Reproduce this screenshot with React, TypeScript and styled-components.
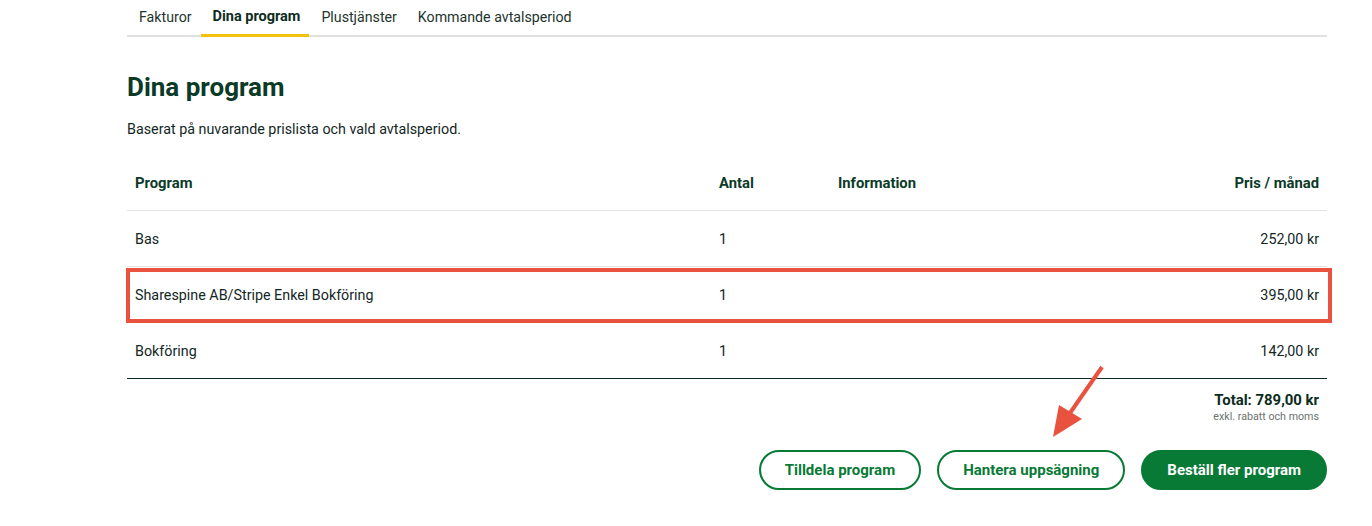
import React from "react";
import styled, { createGlobalStyle } from "styled-components";

const Global = createGlobalStyle`
  html, body { margin: 0; padding: 0; background: #fff; }
  body {
    font-family: Roboto, "Noto Sans", "Liberation Sans", sans-serif;
    color: #13271f;
    -webkit-font-smoothing: antialiased;
  }
`;

const Page = styled.div`
  position: relative;
  width: 1200px;
  padding-left: 127px;
  min-height: 526px;
`;

const TabBar = styled.nav`
  display: flex;
  height: 35px;
  border-bottom: 2px solid #dfe2e1;
`;

const Tab = styled.div<{ $active?: boolean }>`
  display: flex;
  align-items: center;
  padding: 0 9px 1px 12px;
  font-size: ${(p) => (p.$active ? "14.5px" : "14.2px")};
  font-weight: ${(p) => (p.$active ? 700 : 400)};
  color: ${(p) => (p.$active ? "#0d2c20" : "#22342c")};
  border-bottom: 3px solid ${(p) => (p.$active ? "#f4c20d" : "transparent")};
  margin-bottom: -2px;
`;

const Title = styled.h1`
  margin: 34px 0 0;
  font-size: 26px;
  line-height: 32px;
  font-weight: 700;
  color: #0b3a27;
`;

const Lead = styled.p`
  margin: 17px 0 0;
  font-size: 14.3px;
  line-height: 18px;
  color: #13271f;
`;

const Table = styled.div`
  margin-top: 17px;
`;

const Row = styled.div<{ $head?: boolean; $last?: boolean }>`
  display: grid;
  grid-template-columns: 584px 119px 1fr 200px;
  height: 55px;
  align-items: center;
  border-bottom: 1px solid ${(p) => (p.$last ? "#0d2c20" : "#e2e4e3")};
  font-size: ${(p) => (p.$head ? "14.8px" : "14.3px")};
  font-weight: ${(p) => (p.$head ? 700 : 400)};
  color: ${(p) => (p.$head ? "#0b3a27" : "#13271f")};
`;

const Cell = styled.div<{ $right?: boolean }>`
  padding: 0 8px;
  text-align: ${(p) => (p.$right ? "right" : "left")};
`;

const Totals = styled.div`
  display: flex;
  flex-direction: column;
  align-items: flex-end;
  padding: 13px 8px 0 0;
`;

const TotalLine = styled.div`
  font-size: 14.9px;
  font-weight: 700;
  line-height: 16px;
  color: #0d2c20;
`;

const TotalNote = styled.div`
  margin-top: 3px;
  font-size: 10.7px;
  line-height: 12px;
  color: #6b7370;
`;

const Actions = styled.div`
  display: flex;
  justify-content: flex-end;
  gap: 16px;
  margin-top: 27px;
`;

const Button = styled.button<{ $primary?: boolean }>`
  height: 40px;
  box-sizing: border-box;
  padding: 0 24px;
  border-radius: 20px;
  border: 2px solid #087a36;
  background: ${(p) => (p.$primary ? "#087a36" : "#fff")};
  color: ${(p) => (p.$primary ? "#fff" : "#087a36")};
  font-family: inherit;
  font-size: 15px;
  font-weight: 700;
  cursor: pointer;
`;

const Highlight = styled.div`
  position: absolute;
  left: 126px;
  top: 268px;
  width: 1206px;
  height: 55px;
  box-sizing: border-box;
  border: 4px solid #e8523f;
  pointer-events: none;
`;

const Arrow = styled.svg`
  position: absolute;
  left: 1040px;
  top: 355px;
  pointer-events: none;
`;

const rows = [
  { name: "Bas", qty: "1", price: "252,00 kr" },
  { name: "Sharespine AB/Stripe Enkel Bokföring", qty: "1", price: "395,00 kr" },
  { name: "Bokföring", qty: "1", price: "142,00 kr" },
];

export default function App() {
  return (
    <Page>
      <Global />
      <TabBar>
        <Tab>Fakturor</Tab>
        <Tab $active>Dina program</Tab>
        <Tab>Plustjänster</Tab>
        <Tab>Kommande avtalsperiod</Tab>
      </TabBar>
      <Title>Dina program</Title>
      <Lead>Baserat på nuvarande prislista och vald avtalsperiod.</Lead>
      <Table>
        <Row $head>
          <Cell>Program</Cell>
          <Cell>Antal</Cell>
          <Cell>Information</Cell>
          <Cell $right>Pris / månad</Cell>
        </Row>
        {rows.map((r, i) => (
          <Row key={r.name} $last={i === rows.length - 1}>
            <Cell>{r.name}</Cell>
            <Cell>{r.qty}</Cell>
            <Cell />
            <Cell $right>{r.price}</Cell>
          </Row>
        ))}
      </Table>
      <Totals>
        <TotalLine>Total: 789,00 kr</TotalLine>
        <TotalNote>exkl. rabatt och moms</TotalNote>
      </Totals>
      <Actions>
        <Button>Tilldela program</Button>
        <Button>Hantera uppsägning</Button>
        <Button $primary>Beställ fler program</Button>
      </Actions>
      <Highlight />
      <Arrow width="80" height="90" viewBox="0 0 80 90">
        <line x1="62" y1="12" x2="30" y2="58" stroke="#e8523f" strokeWidth="4" />
        <polygon points="13,82 19,50 42,64" fill="#e8523f" />
      </Arrow>
    </Page>
  );
}
